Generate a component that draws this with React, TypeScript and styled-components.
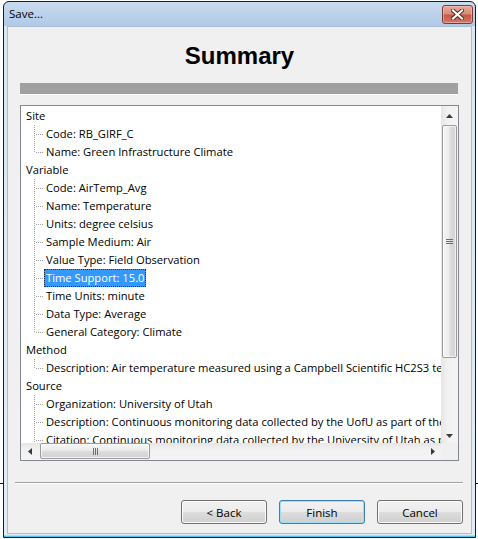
import React from "react";
import styled, { createGlobalStyle, css } from "styled-components";

const GlobalStyle = createGlobalStyle`
  html, body { margin: 0; padding: 0; }
  body {
    min-height: 539px;
    overflow: hidden;
    background: linear-gradient(to bottom, #fff 0, #fff 483px, #111 483px, #111 484px, #fff 484px) no-repeat;
    font-family: "Open Sans", "Noto Sans", sans-serif;
    font-size: 11.2px;
    color: #000;
  }
`;

const Window = styled.div`
  box-sizing: border-box;
  margin: 1px 0 0 3px;
  width: 473px;
  height: 537px;
  border: 1px solid #1c1c1c;
  border-radius: 6px 6px 0 0;
  background: linear-gradient(to bottom, #c9dbef 0, #b0c9e6 24px, #dce7f4 24px, #e3ecf6 100%);
  box-shadow: inset 0 -1px 0 #4cc3ea, inset 0 -2px 0 #a6e0f4;
  display: flex;
  flex-direction: column;
  padding: 0 3px 3px;
`;

const TitleBar = styled.div`
  height: 24px;
  display: flex;
  align-items: flex-start;
  justify-content: space-between;
`;

const TitleText = styled.span`
  line-height: 24px;
  padding-left: 2px;
  font-size: 11.5px;
  color: #000;
`;

const CloseButton = styled.div`
  box-sizing: border-box;
  margin: 3px -1px 0 0;
  width: 31px;
  height: 19px;
  border: 1px solid #7a3a30;
  border-radius: 3px;
  background: linear-gradient(to bottom, #e3aa9c 0%, #d98d7c 45%, #c45a46 55%, #cf7966 100%);
  box-shadow: inset 0 0 0 1px rgba(255, 220, 210, 0.45);
  display: flex;
  align-items: center;
  justify-content: center;
`;

const Client = styled.div`
  flex: 1;
  box-sizing: border-box;
  border: 1px solid #a9bed6;
  background: #f0f0f0;
  display: flex;
  flex-direction: column;
  padding: 15px 12px 0 12px;
`;

const Heading = styled.h1`
  margin: 0;
  font-family: "Liberation Sans", Arial, sans-serif;
  font-weight: bold;
  font-size: 24px;
  line-height: 28px;
  text-align: center;
`;

const Bar = styled.div`
  margin: 13px 1px 0 0;
  height: 11px;
  background: #a0a0a0;
  border-bottom: 1px solid #fff;
`;

const TreeBox = styled.div`
  margin-top: 10px;
  box-sizing: border-box;
  width: 439px;
  height: 356px;
  border: 1px solid #828790;
  background: #fff;
  display: grid;
  grid-template-columns: 420px 17px;
  grid-template-rows: 337px 17px;
`;

const TreeContent = styled.div`
  overflow: hidden;
  padding-top: 1px;
  white-space: nowrap;
`;

const RootRow = styled.div`
  height: 18px;
  line-height: 18px;
  padding-left: 5px;
`;

const dotsV = "repeating-linear-gradient(to bottom, #a0a0a0 0 1px, transparent 1px 2px)";
const dotsH = "repeating-linear-gradient(to right, #a0a0a0 0 1px, transparent 1px 2px)";

const ChildRow = styled.div<{ $last?: boolean }>`
  position: relative;
  height: 18px;
  padding-left: 23px;
  &::before {
    content: "";
    position: absolute;
    left: 13px;
    top: 0;
    width: 1px;
    height: ${(p) => (p.$last ? "9px" : "18px")};
    background: ${dotsV};
  }
  &::after {
    content: "";
    position: absolute;
    left: 15px;
    top: 9px;
    width: 8px;
    height: 1px;
    background: ${dotsH};
  }
`;

const Label = styled.span<{ $selected?: boolean }>`
  display: inline-block;
  box-sizing: border-box;
  height: 18px;
  line-height: 18px;
  padding: 0 2px;
  ${(p) =>
    p.$selected &&
    css`
      background: #3399ff;
      color: #fff;
      outline: 1px dotted #1b2f4d;
      outline-offset: -1px;
    `}
`;

const VScroll = styled.div`
  display: flex;
  flex-direction: column;
  background: linear-gradient(to right, #e6e6e6, #f2f2f2 40%, #f4f4f4);
`;

const HScroll = styled.div`
  display: flex;
  flex-direction: row;
  background: linear-gradient(to bottom, #e6e6e6, #f2f2f2 40%, #f4f4f4);
`;

const Corner = styled.div`
  background: #f0f0f0;
`;

const ArrowButton = styled.div<{ $dx?: number; $dy?: number }>`
  flex: none;
  width: 17px;
  height: 17px;
  display: flex;
  align-items: center;
  justify-content: center;
  svg {
    transform: translate(${(p) => p.$dx ?? 0}px, ${(p) => p.$dy ?? 0}px);
  }
`;

const Spacer = styled.div`
  flex: 1;
`;

const VThumb = styled.div`
  box-sizing: border-box;
  margin: 2px 1px 0 1px;
  height: 233px;
  border: 1px solid #9b9b9b;
  border-radius: 2px;
  background: linear-gradient(to right, #f6f6f6 0%, #ececec 45%, #dcdcdc 55%, #d2d2d2 100%);
  box-shadow: inset 0 0 0 1px rgba(255, 255, 255, 0.7);
  display: flex;
  align-items: center;
  justify-content: center;
`;

const HThumb = styled.div`
  box-sizing: border-box;
  margin: 0 0 1px 2px;
  width: 110px;
  height: 16px;
  border: 1px solid #9b9b9b;
  border-radius: 2px;
  background: linear-gradient(to bottom, #f6f6f6 0%, #ececec 45%, #dcdcdc 55%, #d2d2d2 100%);
  box-shadow: inset 0 0 0 1px rgba(255, 255, 255, 0.7);
  display: flex;
  align-items: center;
  justify-content: center;
`;

const GripV = styled.div`
  width: 7px;
  height: 5px;
  background: repeating-linear-gradient(to bottom, #6d6d6d 0 1px, transparent 1px 2px);
`;

const GripH = styled.div`
  width: 5px;
  height: 7px;
  background: repeating-linear-gradient(to right, #6d6d6d 0 1px, transparent 1px 2px);
`;

const Separator = styled.div`
  margin: 21px -4px 0 -5px;
  border-top: 1px solid #a0a0a0;
  border-bottom: 1px solid #fff;
`;

const ButtonRow = styled.div`
  margin: 16px -4px 0 0;
  display: flex;
  justify-content: flex-end;
  gap: 12px;
`;

const Button = styled.button<{ $default?: boolean }>`
  box-sizing: border-box;
  width: 86px;
  height: 24px;
  padding: 0;
  border: 1px solid #707070;
  border-radius: 3px;
  font-family: "Open Sans", "Noto Sans", sans-serif;
  font-size: 11.5px;
  color: #000;
  background: linear-gradient(to bottom, #f2f2f2 0%, #ebebeb 50%, #dddddd 50%, #cfcfcf 100%);
  box-shadow: inset 0 0 0 1px #fbfbfb;
  ${(p) =>
    p.$default &&
    css`
      border-color: #3c7fb1;
      box-shadow: inset 0 0 0 1px #9fdcf6;
    `}
`;

const Tri = ({ dir }: { dir: "up" | "down" | "left" | "right" }) => {
  const pts =
    dir === "up"
      ? "0,4 7,4 3.5,0"
      : dir === "down"
      ? "0,0 7,0 3.5,4"
      : dir === "left"
      ? "4,0 4,7 0,3.5"
      : "0,0 0,7 4,3.5";
  const w = dir === "up" || dir === "down" ? 7 : 4;
  const h = dir === "up" || dir === "down" ? 4 : 7;
  return (
    <svg width={w} height={h} viewBox={`0 0 ${w} ${h}`}>
      <polygon points={pts} fill="#3a3a3a" />
    </svg>
  );
};

type Group = { title: string; items: string[]; more?: boolean };

const groups: Group[] = [
  { title: "Site", items: ["Code: RB_GIRF_C", "Name: Green Infrastructure Climate"] },
  {
    title: "Variable",
    items: [
      "Code: AirTemp_Avg",
      "Name: Temperature",
      "Units: degree celsius",
      "Sample Medium: Air",
      "Value Type: Field Observation",
      "Time Support: 15.0",
      "Time Units: minute",
      "Data Type: Average",
      "General Category: Climate",
    ],
  },
  {
    title: "Method",
    items: [
      "Description: Air temperature measured using a Campbell Scientific HC2S3 temperature and relative humidity probe",
    ],
  },
  {
    title: "Source",
    more: true,
    items: [
      "Organization: University of Utah",
      "Description: Continuous monitoring data collected by the UofU as part of the iUTAH GAMUT network",
      "Citation: Continuous monitoring data collected by the University of Utah as part of the iUTAH project",
      "Contact: iUTAH Data Manager",
    ],
  },
];

export default function App() {
  return (
    <>
      <GlobalStyle />
      <Window>
        <TitleBar>
          <TitleText>Save...</TitleText>
          <CloseButton>
            <svg width="13" height="11" viewBox="0 0 13 11">
              <path d="M2 1.5 L11 9.5 M11 1.5 L2 9.5" stroke="#5a2219" strokeWidth="4" strokeLinecap="square" />
              <path d="M2 1.5 L11 9.5 M11 1.5 L2 9.5" stroke="#fff" strokeWidth="2.2" strokeLinecap="square" />
            </svg>
          </CloseButton>
        </TitleBar>
        <Client>
          <Heading>Summary</Heading>
          <Bar />
          <TreeBox>
            <TreeContent>
              {groups.map((g) => (
                <div key={g.title}>
                  <RootRow>{g.title}</RootRow>
                  {g.items.map((it, i) => (
                    <ChildRow key={it} $last={!g.more && i === g.items.length - 1}>
                      <Label $selected={it === "Time Support: 15.0"}>{it}</Label>
                    </ChildRow>
                  ))}
                </div>
              ))}
            </TreeContent>
            <VScroll>
              <ArrowButton $dy={1}>
                <Tri dir="up" />
              </ArrowButton>
              <VThumb>
                <GripV />
              </VThumb>
              <Spacer />
              <ArrowButton $dy={1}>
                <Tri dir="down" />
              </ArrowButton>
            </VScroll>
            <HScroll>
              <ArrowButton>
                <Tri dir="left" />
              </ArrowButton>
              <HThumb>
                <GripH />
              </HThumb>
              <Spacer />
              <ArrowButton>
                <Tri dir="right" />
              </ArrowButton>
            </HScroll>
            <Corner />
          </TreeBox>
          <Separator />
          <ButtonRow>
            <Button>&lt; Back</Button>
            <Button $default>Finish</Button>
            <Button>Cancel</Button>
          </ButtonRow>
        </Client>
      </Window>
    </>
  );
}
